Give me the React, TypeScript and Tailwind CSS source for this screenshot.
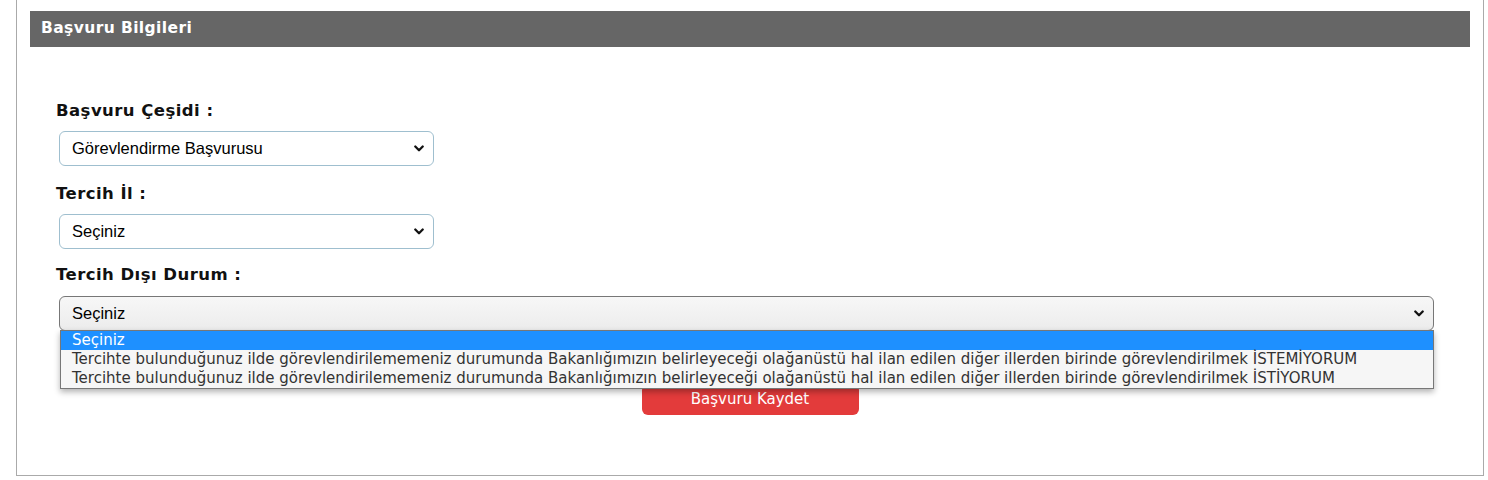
import React from 'react';

const Chevron: React.FC = () => (
    <svg width="10" height="7" viewBox="0 0 10 7" className="shrink-0">
        <path d="M1.3 1.5 L5 5.2 L8.7 1.5" fill="none" stroke="#111" strokeWidth="2.3" strokeLinecap="round" strokeLinejoin="round" />
    </svg>
);

const options = [
    'Seçiniz',
    'Tercihte bulunduğunuz ilde görevlendirilememeniz durumunda Bakanlığımızın belirleyeceği olağanüstü hal ilan edilen diğer illerden birinde görevlendirilmek İSTEMİYORUM',
    'Tercihte bulunduğunuz ilde görevlendirilememeniz durumunda Bakanlığımızın belirleyeceği olağanüstü hal ilan edilen diğer illerden birinde görevlendirilmek İSTİYORUM',
];

const App: React.FC = () => {
    const label = "text-[16.5px] leading-5 tracking-[0.45px] font-bold text-[#111] font-['DejaVu_Sans',sans-serif] pl-[26px]";
    const selectBox = "flex items-center justify-between h-[35px] rounded-md border pl-3 pr-[9px] text-[16.5px] text-black font-['Liberation_Sans',Arial,sans-serif]";

    return (
        <div className="w-[1488px] h-[480px] bg-white">
            <div className="mx-4 w-[1468px] h-[476px] border border-t-0 border-[#aaa] px-[13px] pt-[11px]">
                <div className="h-9 bg-[#666] flex items-center pl-[11px]">
                    <span className="text-white text-[15.5px] tracking-[0.4px] font-bold font-['DejaVu_Sans',sans-serif]">Başvuru Bilgileri</span>
                </div>

                <div className="pt-[54px]">
                    <div className={label}>Başvuru Çeşidi :</div>
                    <div className={`${selectBox} mt-[10px] ml-[29px] w-[375px] bg-white border-[#9fbfcf]`}>
                        <span>Görevlendirme Başvurusu</span>
                        <Chevron />
                    </div>

                    <div className={`${label} mt-[18px]`}>Tercih İl :</div>
                    <div className={`${selectBox} mt-[10px] ml-[29px] w-[375px] h-[34px] bg-white border-[#9fbfcf]`}>
                        <span>Seçiniz</span>
                        <Chevron />
                    </div>

                    <div className={`${label} mt-[16px]`}>Tercih Dışı Durum :</div>
                    <div className="relative mt-[11px] ml-[29px] w-[1375px]">
                        <div className={`${selectBox} h-[35px] bg-gradient-to-b from-[#f7f7f7] to-[#ececec] border-[#777]`}>
                            <span>Seçiniz</span>
                            <Chevron />
                        </div>
                        <div className="absolute left-px right-0 top-[34px] z-10 bg-[#f6f6f6] border border-[#777] shadow-[0_3px_6px_rgba(0,0,0,0.3)] font-['DejaVu_Sans',sans-serif] text-[15px] leading-[19px] text-[#333]">
                            {options.map((opt, i) => (
                                <div key={i} className={`pl-[11px] h-[19px] whitespace-nowrap ${i === 0 ? 'bg-[#1e90ff] text-white' : ''}`}>{opt}</div>
                            ))}
                        </div>
                    </div>

                    <div className="flex justify-center mt-[53px]">
                        <button className="w-[217px] h-[31px] rounded-md bg-[#e33b3b] text-white text-[15px] font-['DejaVu_Sans',sans-serif]">
                            Başvuru Kaydet
                        </button>
                    </div>
                </div>
            </div>
        </div>
    );
};

export default App;
